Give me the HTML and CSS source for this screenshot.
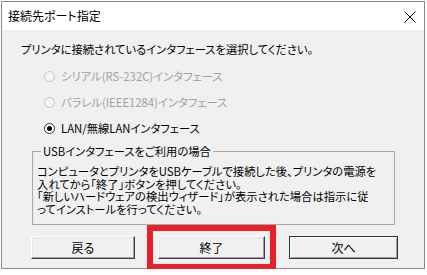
FILE: index.html
```html
<!DOCTYPE html>
<html lang="ja">
<head>
  <meta charset="UTF-8">
  <title>接続先ポート指定</title>
  <link rel="stylesheet" href="styles.css">
</head>
<body>

  <div class="window">
    <!-- title bar -->
    <div class="titlebar">
      <span class="titlebar__text">接続先ポート指定</span>
      <svg class="titlebar__close" width="12" height="12" viewBox="0 0 12 12">
        <path d="M0.5 0.5 L11.5 11.5 M11.5 0.5 L0.5 11.5" stroke="#000" stroke-width="1" fill="none"/>
      </svg>
    </div>

    <div class="dialog">
      <p class="prompt">プリンタに接続されているインタフェースを選択してください。</p>

      <div class="radios">
        <label class="radio radio--disabled"><span class="radio__dot"></span>シリアル(RS-232C)インタフェース</label>
        <label class="radio radio--disabled"><span class="radio__dot"></span>パラレル(IEEE1284)インタフェース</label>
        <label class="radio radio--checked"><span class="radio__dot"></span>LAN/無線LANインタフェース</label>
      </div>

      <fieldset class="group">
        <legend>USBインタフェースをご利用の場合</legend>
        <p>コンピュータとプリンタをUSBケーブルで接続した後、プリンタの電源を<br>入れてから「終了」ボタンを押してください。<br>「新しいハードウェアの検出ウィザード」が表示された場合は指示に従<br>ってインストールを行ってください。</p>
      </fieldset>

      <div class="buttons">
        <button class="btn btn--back">戻る</button>
        <button class="btn btn--finish">終了</button>
        <button class="btn btn--next">次へ</button>
      </div>
    </div>
  </div>

</body>
</html>
```

FILE: styles.css
```css
/* Reset */
*, *::before, *::after {
  margin: 0;
  padding: 0;
  box-sizing: border-box;
}
body {
  background: #fff;
  font-family: "Noto Sans CJK JP", "Noto Sans", sans-serif;
  font-size: 11.3px;
  font-feature-settings: "palt";
  color: #000;
  padding: 1px 0 0 1px;
}

/* ===== Window frame ===== */
.window {
  width: 424px;
  height: 268px;
  border: 1px solid #8a8a8a;
  background: #f0f0f0;
  display: flex;
  flex-direction: column;
}
.titlebar {
  height: 28px;
  background: #fff;
  display: flex;
  align-items: center;
  justify-content: space-between;
  padding: 0 8px 0 6px;
  flex-shrink: 0;
}
.titlebar__text {
  font-size: 12px;
  line-height: 14px;
}
.titlebar__close {
  display: block;
  margin-top: 2px;
}

/* ===== Dialog body ===== */
.dialog {
  padding: 12px 0 0 0;
}
.prompt {
  line-height: 14px;
  padding-left: 19px;
}

/* radio list */
.radios {
  margin-top: 7px;
  padding-left: 42px;
}
.radio {
  display: flex;
  align-items: center;
  height: 26px;
  gap: 6px;
}
.radio__dot {
  width: 11px;
  height: 11px;
  border-radius: 50%;
  border: 1px solid #333;
  background: #fff;
  position: relative;
}
.radio--disabled {
  color: #a0a0a0;
}
.radio--disabled .radio__dot {
  border-color: #c4c4c4;
  background: #f4f4f4;
}
.radio--checked .radio__dot::after {
  content: "";
  position: absolute;
  top: 2px; left: 2px;
  width: 5px; height: 5px;
  border-radius: 50%;
  background: #000;
}

/* group box */
.group {
  margin: 3px 29px 0 30px;
  border: 1px solid #a8a8a8;
  padding: 7px 4px 8px 4px;
}
.group legend {
  line-height: 14px;
  padding: 0 2px;
  margin-left: 4px;
}
.group p {
  line-height: 12.7px;
  white-space: nowrap;
}

/* buttons */
.buttons {
  display: flex;
  margin-top: 11px;
  padding-left: 29px;
  gap: 23px;
}
.btn {
  height: 23px;
  width: 104px;
  font: inherit;
  font-size: 12px;
  background: #f0f0f0;
  border: 1px solid;
  border-color: #fff #404040 #404040 #fff;
  box-shadow: inset -1px -1px #a0a0a0, inset 1px 1px #e3e3e3;
}
.btn--finish {
  width: 107px;
  /* red annotation frame */
  outline: 6px solid #e8202a;
  outline-offset: 5px;
}
.btn--next {
  width: 109px;
  margin-left: 1px;
  border-color: #333;
  box-shadow: inset 1px 1px #fff, inset -1px -1px #a0a0a0;
}
```
